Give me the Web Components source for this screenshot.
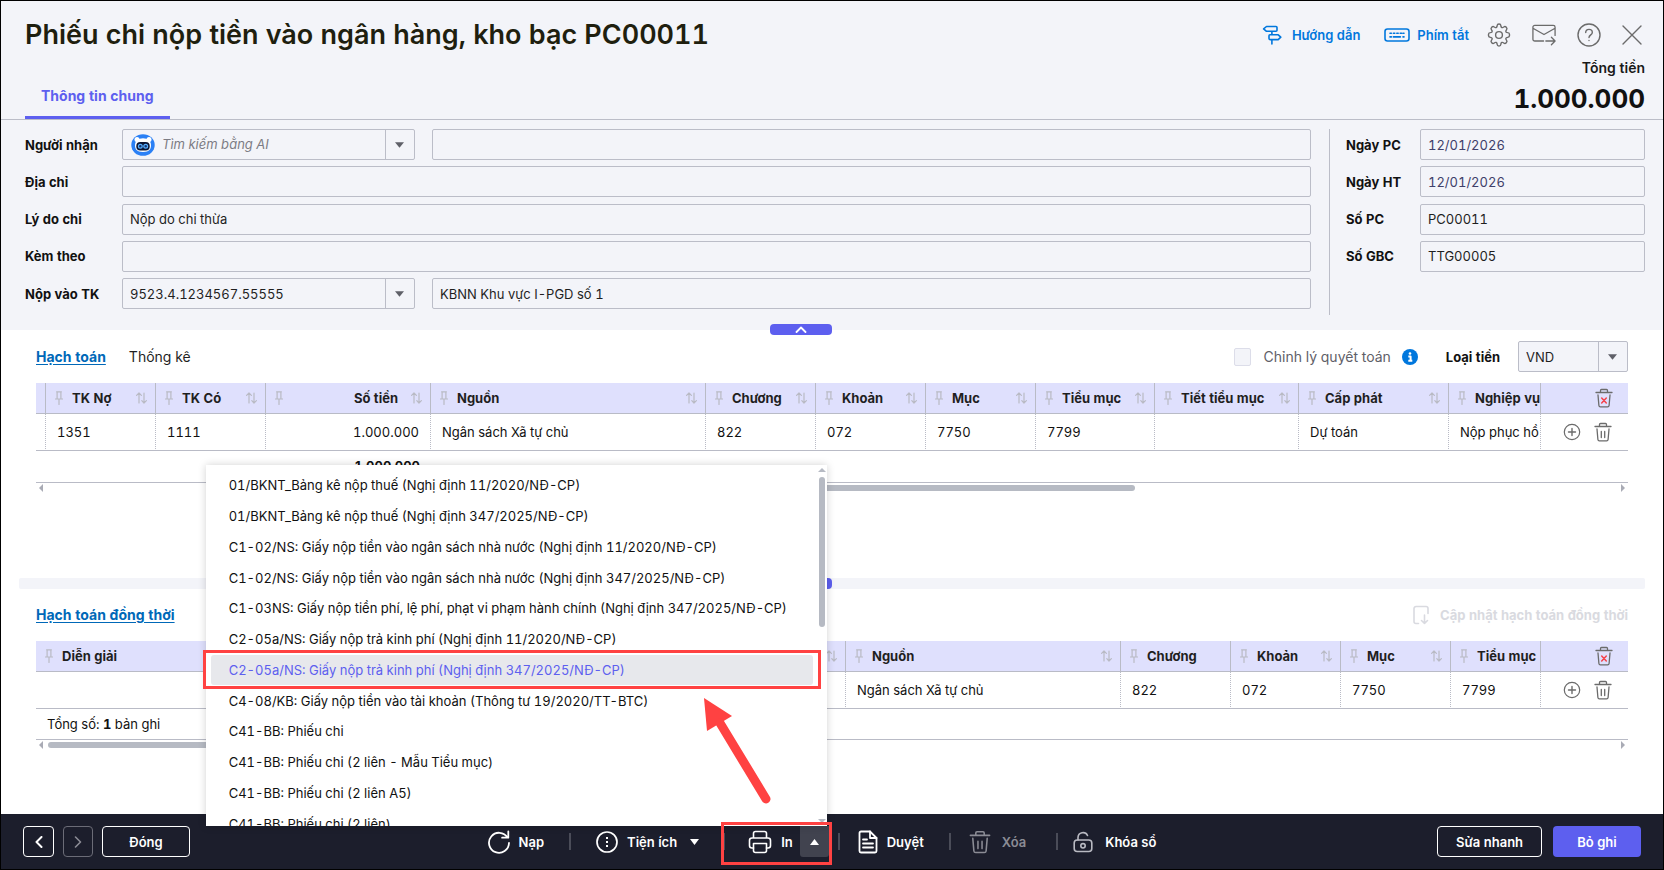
<!DOCTYPE html>
<html lang="vi">
<head>
<meta charset="utf-8">
<title>Phiếu chi nộp tiền vào ngân hàng, kho bạc PC00011</title>
<style>
  html, body { margin: 0; height: 100%; }
  body { font: 13px/20px Inter, "Liberation Sans", sans-serif; font-variant-numeric: tabular-nums; color: #1a1a1a; background: #fff; }
</style>
</head>
<body>
<voucher-page>
  <voucher-header slot="header" heading="Phiếu chi nộp tiền vào ngân hàng, kho bạc PC00011" tab="Thông tin chung" total="1.000.000"></voucher-header>
  <voucher-form slot="header"></voucher-form>
  <collapse-handle></collapse-handle>
  <entry-section></entry-section>
  <pane-splitter></pane-splitter>
  <parallel-section></parallel-section>
  <action-bar slot="footer"></action-bar>
</voucher-page>

<script>
const define = (name, html, setup) => {
  const template = document.createElement('template');
  template.innerHTML = '<style>*, *::before, *::after { box-sizing: border-box; } button, input, select { font: inherit; font-variant-numeric: tabular-nums; color: inherit; margin: 0; } button { padding: 0; border: 0; background: none; }</style>' + html;
  customElements.define(name, class extends HTMLElement {
    connectedCallback() {
      if (this.shadowRoot) return;
      this.attachShadow({ mode: 'open' }).append(template.content.cloneNode(true));
      if (setup) setup(this.shadowRoot, this);
    }
  });
};

/* ---------- icons: [width, height, markup] ---------- */
const ICONS = {
  signpost: [20, 20, '<g stroke-width="1.6"><path d="M4.500 1.500h9.500a1 1 0 0 1 1 1v2.800a1 1 0 0 1-1 1H4.500L1.600 3.900zM16.200 9.800H8a1 1 0 0 0-1 1v2.800a1 1 0 0 0 1 1h8.200l2.600-2.400zM9.900 6.300v3.500M9.900 14.600V19"/></g>'],
  keyboard: [26, 14, '<rect x="1" y="1" width="24" height="12" rx="2.5" stroke-width="1.6"/><path stroke-width="1.6" d="M6 5.3h1.4M9.4 5.3h1.4M12.8 5.3h1.4M16.2 5.3h1.4M19 5.3h1M6 8.9h1.4M9.4 8.9h7M19 8.9h1"/>'],
  gear: [24, 24, '<circle cx="12" cy="12" r="3.4"/><path d="M12 1c1 0 1.8.8 1.9 1.8l.2 1c.2.7 1.100 1.100 1.800.7l.8-.5c.8-.6 1.900-.5 2.600.2.7.7.8 1.800.2 2.600l-.5.8c-.4.7 0 1.600.7 1.800l1 .2c1 .1 1.800.9 1.800 1.900v1c0 1-.8 1.800-1.800 1.900l-1 .2c-.7.2-1.100 1.100-.7 1.800l.5.8c.6.8.5 1.900-.2 2.600-.7.7-1.800.8-2.600.2l-.8-.5c-.7-.4-1.600 0-1.800.7l-.2 1C13.800 22.200 13 23 12 23s-1.800-.8-1.900-1.800l-.2-1c-.2-.7-1.100-1.100-1.800-.7l-.8.5c-.8.6-1.900.5-2.600-.2-.7-.7-.8-1.800-.2-2.600l.5-.8c.4-.7 0-1.600-.7-1.800l-1-.2C2.300 14.200 1.500 13.400 1.500 12.500v-1c0-1 .8-1.800 1.800-1.900l1-.2c.7-.2 1.100-1.100.7-1.800l-.5-.8c-.6-.8-.5-1.900.2-2.600.7-.7 1.800-.8 2.600-.2l.8.5c.7.4 1.600 0 1.800-.7l.2-1C10.200 1.800 11 1 12 1z"/>'],
  mail: [26, 24, '<path d="M12.500 18.500H3a2 2 0 0 1-2-2V3.500a2 2 0 0 1 2-2h20a2 2 0 0 1 2 2v9M1.500 5l11.500 6.500L24.500 5M15 18.500h9.500M21 14.500l4 4-4 4"/>'],
  help: [24, 24, '<circle cx="12" cy="12" r="11"/><path d="M8.700 9.600c0-2 1.400-3.200 3.300-3.200s3.300 1.200 3.300 3c0 2.400-3.300 2.500-3.300 5.200"/><circle cx="12" cy="17.500" r=".7" fill="currentColor" stroke="none"/>'],
  close: [20, 20, '<path d="M1 1l18 18M19 1L1 19"/>'],
  pin: [8, 14, '<path stroke-width="1.200" d="M1.600.800h4.800M2.100.800v6.700M5.900.800v6.700M.400 8h7.200M4 8v5.500"/>'],
  sort: [11, 12, '<path stroke-width="1.200" d="M3 11V1M.600 3.400L3 1l2.400 2.400M8 1v10M5.800 8.600L8 11l2.400-2.400"/>'],
  trash: [18, 20, '<path stroke-width="1.300" d="M1 4.500h16M5.500 4.500V2.500a1 1 0 0 1 1-1h5a1 1 0 0 1 1 1v2M3 7l.900 10.500a1.500 1.500 0 0 0 1.500 1.300h7.200a1.500 1.500 0 0 0 1.500-1.300L15 7M7.300 9.500v6M10.700 9.500v6"/>'],
  trashAll: [18, 20, '<path stroke-width="1.300" d="M1 4.500h16M5.500 4.500V2.500a1 1 0 0 1 1-1h5a1 1 0 0 1 1 1v2M3 7l.900 10.500a1.500 1.500 0 0 0 1.500 1.300h7.200a1.500 1.500 0 0 0 1.500-1.300L15 7"/><path stroke="#f5424b" stroke-width="1.500" d="M6.700 10l4.600 5M11.300 10l-4.600 5"/>'],
  plus: [18, 18, '<circle cx="9" cy="9" r="7.700" stroke-width="1.200"/><path stroke-width="1.400" d="M9 5.500v7M5.500 9h7"/>'],
  update: [18, 20, '<path stroke-width="1.600" d="M6.500 18.500H4a2 2 0 0 1-2-2v-13a2 2 0 0 1 2-2h10a2 2 0 0 1 2 2v5M12.500 10v8.500M9.500 15.500l3 3 3-3"/>'],
  info: [16, 16, '<circle cx="8" cy="8" r="8" fill="#0077dd" stroke="none"/><path stroke="#fff" stroke-width="2" stroke-linecap="butt" d="M6.300 7.500H8.600V11.500M6.300 11.800h4"/><circle cx="8" cy="4.500" r="1.300" fill="#fff" stroke="none"/>'],
  caret: [8, 5, '<path fill="currentColor" stroke="none" d="M0 0h8L4 5z"/>'],
  caretUp: [9, 6, '<path fill="currentColor" stroke="none" d="M0 6h9L4.500 0z"/>'],
  caretDown: [9, 6, '<path fill="currentColor" stroke="none" d="M0 0h9L4.500 6z"/>'],
  chevUp: [12, 7, '<path stroke-width="1.800" d="M1.500 6L6 1.500 10.500 6"/>'],
  chevLeft: [8, 12, '<path stroke-width="2" d="M6.500 1l-5 5 5 5"/>'],
  chevRight: [8, 12, '<path stroke-width="1.600" d="M1.500 1l5 5-5 5"/>'],
  scrollLeft: [4, 8, '<path fill="currentColor" stroke="none" d="M4 0v8L0 4z"/>'],
  scrollRight: [4, 8, '<path fill="currentColor" stroke="none" d="M0 0v8l4-4z"/>'],
  scrollUp: [8, 4, '<path fill="currentColor" stroke="none" d="M0 4h8L4 0z"/>'],
  scrollDown: [8, 4, '<path fill="currentColor" stroke="none" d="M0 0h8L4 4z"/>'],
  reload: [22, 24, '<path stroke-width="1.800" d="M19.500 7.500a10 10 0 1 0 1.500 5.500M20.300 1.500v6.200h-6.200"/>'],
  more: [22, 22, '<circle cx="11" cy="11" r="10" stroke-width="1.700"/><path stroke="none" fill="currentColor" d="M10 6h2v2h-2zM10 10h2v2h-2zM10 14h2v2h-2z"/>'],
  print: [24, 24, '<g stroke-width="1.600"><path d="M5.500 8V3.500a2 2 0 0 1 2-2h9a2 2 0 0 1 2 2V8M5.500 18H4a2.500 2.500 0 0 1-2.500-2.500v-5A2.500 2.500 0 0 1 4 8h16a2.500 2.500 0 0 1 2.500 2.500v5A2.500 2.500 0 0 1 20 18h-1.500"/><path d="M5.500 13.500h13v7a2 2 0 0 1-2 2h-9a2 2 0 0 1-2-2z"/></g>'],
  document: [20, 24, '<g stroke-width="1.800"><path d="M12 1.500H3a1.500 1.500 0 0 0-1.500 1.500v18A1.500 1.500 0 0 0 3 22.500h14a1.500 1.500 0 0 0 1.500-1.500V8z"/><path d="M12 1.500V8h6.500M5 9.500h4M5 13.500h10M5 17.500h10"/></g>'],
  lock: [20, 22, '<g stroke-width="1.600"><rect x="1.200" y="9" width="17.600" height="11.500" rx="3"/><path d="M5 9V6.500a5 5 0 0 1 9.500-2"/><circle cx="10" cy="14.800" r="2.200"/></g>'],
  robot: [24, 22, '<ellipse cx="12" cy="11" rx="11.700" ry="10.800" fill="#2b80f5" stroke="none"/><g fill="#fff" stroke="none"><circle cx="6" cy="5.500" r="2.500"/><circle cx="18" cy="5.500" r="2.500"/><path d="M12 4.200c5 0 8 3 8 6.800s-1.500 7-8 7-8-3.200-8-7 3-6.800 8-6.800z"/></g><rect x="5.300" y="8" width="13.400" height="8.500" rx="4" fill="#0b1433" stroke="none"/><circle cx="9.300" cy="12.200" r="1.900" fill="#12306e" stroke="#58b0ff" stroke-width="1.200"/><circle cx="14.700" cy="12.200" r="1.900" fill="#12306e" stroke="#58b0ff" stroke-width="1.200"/>']
};
customElements.define('ui-icon', class extends HTMLElement {
  connectedCallback() {
    if (this.shadowRoot) return;
    const [w, h, body] = ICONS[this.getAttribute('name')];
    const width = this.getAttribute('w') || w, height = this.getAttribute('h') || h;
    this.attachShadow({ mode: 'open' }).innerHTML =
      `<style>:host{display:inline-flex;flex:none}svg{display:block}</style>
       <svg width="${width}" height="${height}" viewBox="0 0 ${w} ${h}" fill="none" stroke="currentColor" stroke-width="1.400" stroke-linecap="round" stroke-linejoin="round" aria-hidden="true">${body}</svg>`;
  }
});

/* ---------- page shell ---------- */
define('voucher-page', `
<style>
  :host { display: flex; flex-direction: column; min-height: 100%; border: 1px solid #000; box-sizing: border-box; }
  header { background: #f3f4f9; }
  main { flex: 1; }
</style>
<header><slot name="header"></slot></header>
<main><slot></slot></main>
<slot name="footer"></slot>`);

/* ---------- header ---------- */
define('voucher-header', `
<style>
  :host { display: flex; justify-content: space-between; height: 119px; box-sizing: border-box; padding: 0 18px 0 24px; border-bottom: 1px solid #bbbdc8; }
  .left { display: flex; flex-direction: column; justify-content: space-between; }
  h1 { margin: 0; padding-top: 16px; font-size: 27px; line-height: 36px; font-weight: 600; color: #1f1f0f; }
  nav { display: flex; }
  nav a { padding: 0 16px 8px; font-weight: 700; font-size: 14px; line-height: 24px; color: #5d5fef; text-decoration: none; border-bottom: 3px solid #5d5fef; }
  .right { display: flex; flex-direction: column; align-items: flex-end; }
  .tools { display: flex; align-items: center; padding: 22px 3px 0 0; height: 46px; color: #6b6b6b; }
  .tools a { display: flex; align-items: center; gap: 10px; margin-right: 24px; color: #0077dd; text-decoration: none; font-weight: 600; line-height: 24px; }
  .tools a + a { gap: 7px; margin-right: 18px; }
  .tools button { display: flex; }
  .tools .icons { display: flex; align-items: center; gap: 21px; }
  .caption { margin-top: 11px; font-size: 14px; font-weight: 600; line-height: 20px; }
  .total { font-size: 26px; font-weight: 700; line-height: 42px; color: #111; }
</style>
<div class="left">
  <h1></h1>
  <nav><a href="#general"></a></nav>
</div>
<div class="right">
  <div class="tools">
    <a href="#guide"><ui-icon name="signpost"></ui-icon>Hướng dẫn</a>
    <a href="#shortcuts"><ui-icon name="keyboard"></ui-icon>Phím tắt</a>
    <div class="icons">
      <button aria-label="Thiết lập"><ui-icon name="gear"></ui-icon></button>
      <button aria-label="Gửi thư"><ui-icon name="mail" w="24"></ui-icon></button>
      <button aria-label="Trợ giúp"><ui-icon name="help"></ui-icon></button>
      <button aria-label="Thoát"><ui-icon name="close"></ui-icon></button>
    </div>
  </div>
  <div class="caption">Tổng tiền</div>
  <div class="total"></div>
</div>`, (root, host) => {
  root.querySelector('h1').textContent = host.getAttribute('heading');
  root.querySelector('nav a').textContent = host.getAttribute('tab');
  root.querySelector('.total').textContent = host.getAttribute('total');
});

/* ---------- voucher form ---------- */
const FIELD_CSS = `
  input, .combo { width: 100%; min-width: 0; height: 31px; border: 1px solid #bbbdc8; border-radius: 2px; background: #f3f4f9; color: #1f1f1f; }
  input { padding: 0 7px; line-height: 29px; outline: 0; }
  .combo { display: flex; position: relative; }
  .combo select, .combo input { flex: 1; height: 29px; width: 100%; border: 0; background: none; appearance: none; outline: 0; padding: 0 7px; }
  .combo .arrow { width: 29px; padding-right: 2px; display: flex; align-items: center; justify-content: center; border-left: 1px solid #bbbdc8; color: #5f6068; pointer-events: none; flex: none; }`;
define('voucher-form', `
<style>
  :host { display: flex; padding: 9px 18px 15px 24px; }
  ${FIELD_CSS}
  .main, .side { display: grid; grid-template-rows: repeat(5, 31px); align-content: space-between; height: 180px; align-items: center; }
  .main { flex: 1; grid-template-columns: 97px 293px 17px 1fr; }
  .side { grid-template-columns: 74px 225px; margin-left: 16px; }
  .rule { width: 1px; height: 186px; margin-left: 18px; background: #bbbdc8; }
  label { font-weight: 700; color: #111; }
  .wide { grid-column: 2 / 5; }
  .last { grid-column: 4; }
  ui-icon[name=robot] { align-self: center; margin-left: 8px; }
  ::placeholder { color: #7c7c84; font-style: italic; opacity: 1; }
  .date { color: #40406a; }
</style>
<div class="main">
  <label for="receiver">Người nhận</label>
  <div class="combo"><ui-icon name="robot"></ui-icon><input id="receiver" placeholder="Tìm kiếm bằng AI"><span class="arrow"><ui-icon name="caret" w="9" h="6"></ui-icon></span></div>
  <input class="last" aria-label="Tên người nhận">
  <label for="address">Địa chỉ</label><input class="wide" id="address">
  <label for="reason">Lý do chi</label><input class="wide" id="reason" value="Nộp do chi thừa">
  <label for="attach">Kèm theo</label><input class="wide" id="attach">
  <label for="account">Nộp vào TK</label>
  <div class="combo"><select id="account"><option>9523.4.1234567.55555</option></select><span class="arrow"><ui-icon name="caret" w="9" h="6"></ui-icon></span></div>
  <input class="last" aria-label="Tên tài khoản" value="KBNN Khu vực I-PGD số 1">
</div>
<div class="rule"></div>
<div class="side">
  <label for="pcDate">Ngày PC</label><input id="pcDate" class="date" value="12/01/2026">
  <label for="htDate">Ngày HT</label><input id="htDate" class="date" value="12/01/2026">
  <label for="pcNo">Số PC</label><input id="pcNo" value="PC00011">
  <label for="gbcNo">Số GBC</label><input id="gbcNo" value="TTG00005">
</div>`);

/* ---------- collapse handle under the form ---------- */
define('collapse-handle', `
<style>
  :host { display: flex; justify-content: center; height: 0; position: relative; }
  button { width: 62px; height: 11px; margin: -6px 62px 0 0; border-radius: 4px; background: #5d5fef; color: #fff; display: flex; align-items: center; justify-content: center; }
</style>
<button aria-label="Thu gọn thông tin chung"><ui-icon name="chevUp"></ui-icon></button>`);

/* ---------- data grid ---------- */
define('data-grid', `
<style>
  :host { display: block; }
  table { width: 100%; table-layout: fixed; border-collapse: separate; border-spacing: 0; }
  th, td { padding: 0; overflow: hidden; white-space: nowrap; }
  th { height: 31px; background: #dfe0fd; border-bottom: 1px solid #b9bbc6; border-right: 1px solid #b9bbc6; color: #1f1f1f; font-weight: 700; }
  .head { display: flex; align-items: center; padding: 0 8px 0 9px; gap: 9px; color: #b9bac4; }
  .head b { flex: 1; font-weight: 700; color: #1f1f1f; text-align: left; }
  .num .head b { text-align: right; padding-right: 4px; }
  .clip .head { padding-right: 0; }
  td { height: 37px; border-bottom: 1px solid #b9bbc6; border-right: 1px dotted #b9bbc6; padding: 0 11px; color: #111; }
  td.clip { padding-right: 0; }
  td.num { text-align: right; }
  th:last-child, td:last-child { border-right: 0; color: #6b6b6b; }
  .ops { display: flex; align-items: center; justify-content: flex-end; gap: 13px; }
  th .ops { padding-right: 15px; }
  td .ops { padding-right: 5px; }
  .ops button { display: flex; }
  tfoot td { height: 32px; border-right: 0; font-weight: 700; padding-bottom: 1px; }
  tfoot td.note { height: 31px; font-weight: 400; color: #111; }
  .bar { display: flex; align-items: center; height: 10px; padding: 0 3px; gap: 5px; color: #a9abb5; }
  .track { flex: 1; display: grid; }
  .thumb { height: 6px; border-radius: 3px; background: #b6bac3; }
</style>
<table><colgroup></colgroup><thead><tr></tr></thead><tbody><tr></tr></tbody><tfoot><tr></tr></tfoot></table>
<div class="bar"><ui-icon name="scrollLeft"></ui-icon><div class="track"><div class="thumb"></div></div><ui-icon name="scrollRight"></ui-icon></div>`,
(root, host) => {
  const cols = host.columns || [];
  const $ = s => root.querySelector(s);
  $('colgroup').innerHTML = cols.map(c => `<col${c.w ? ` style="width:${c.w}px"` : ''}>`).join('') + '<col style="width:87px">';
  $('thead tr').innerHTML = cols.map(c => {
    const cls = (c.num ? 'num ' : '') + (c.clip ? 'clip' : '');
    return c.label ? `<th class="${cls}"><div class="head"><ui-icon name="pin"></ui-icon><b>${c.label}</b>${c.sort === false ? '' : '<ui-icon name="sort"></ui-icon>'}</div></th>` : '<th></th>';
  }).join('') + '<th><div class="ops"><button aria-label="Xóa tất cả"><ui-icon name="trashAll"></ui-icon></button></div></th>';
  $('tbody tr').innerHTML = cols.map(c => `<td class="${(c.num ? 'num ' : '') + (c.clip ? 'clip' : '')}">${c.value || ''}</td>`).join('') +
    '<td><div class="ops"><button aria-label="Thêm dòng"><ui-icon name="plus"></ui-icon></button><button aria-label="Xóa dòng"><ui-icon name="trash"></ui-icon></button></div></td>';
  $('tfoot tr').innerHTML = host.note
    ? `<td class="note" colspan="${cols.length + 1}">${host.note}</td>`
    : cols.map(c => `<td class="${c.num ? 'num' : ''}">${c.sum || ''}</td>`).join('') + '<td></td>';
  $('.thumb').style.marginLeft = host.thumb[0];
  $('.thumb').style.width = host.thumb[1];
});

/* ---------- main entries ---------- */
define('entry-section', `
<style>
  :host { display: block; padding: 10px 35px 0; }
  ${FIELD_CSS}
  .toolbar { display: flex; align-items: center; height: 33px; margin-bottom: 10px; font-size: 14px; }
  nav { display: flex; gap: 23px; flex: 1; }
  nav a { color: #1f1f1f; text-decoration: none; }
  nav a.on { color: #0068b8; font-weight: 700; text-decoration: underline; text-underline-offset: 2px; }
  input[type=checkbox] { appearance: none; width: 17px; height: 18px; padding: 0; border: 1px solid #dcdde9; margin-right: 13px; }
  .adjust { display: flex; align-items: center; color: #5f6068; }
  ui-icon[name=info] { margin: 0 28px 0 11px; }
  .currency { font-size: 13px; font-weight: 700; color: #111; margin-right: 18px; }
  .combo { width: 110px; font-size: 13px; }
</style>
<div class="toolbar">
  <nav><a class="on" href="#entries">Hạch toán</a><a href="#statistics">Thống kê</a></nav>
  <label class="adjust"><input type="checkbox" disabled>Chỉnh lý quyết toán</label>
  <ui-icon name="info"></ui-icon>
  <label class="currency" for="currency">Loại tiền</label>
  <div class="combo"><select id="currency"><option>VND</option></select><span class="arrow"><ui-icon name="caret" w="9" h="6"></ui-icon></span></div>
</div>
<div class="grid"></div>`, root => {
  const grid = document.createElement('data-grid');
  grid.columns = [
    { w: 10 },
    { label: 'TK Nợ', w: 110, value: '1351' },
    { label: 'TK Có', w: 110, value: '1111' },
    { label: 'Số tiền', w: 165, value: '1.000.000', sum: '1.000.000', num: true },
    { label: 'Nguồn', value: 'Ngân sách Xã tự chủ' },
    { label: 'Chương', w: 110, value: '822' },
    { label: 'Khoản', w: 110, value: '072' },
    { label: 'Mục', w: 110, value: '7750' },
    { label: 'Tiểu mục', w: 119, value: '7799' },
    { label: 'Tiết tiểu mục', w: 144 },
    { label: 'Cấp phát', w: 150, value: 'Dự toán' },
    { label: 'Nghiệp vụ', w: 92, value: 'Nộp phục hồ', clip: true, sort: false }
  ];
  grid.thumb = ['30%', '39.3%'];
  root.querySelector('.grid').append(grid);
});

/* ---------- splitter ---------- */
define('pane-splitter', `
<style>
  :host { display: flex; justify-content: center; margin: 85px 18px 0; height: 11px; border-radius: 2px; background: #f3f4f9; }
  button { width: 62px; height: 11px; margin-right: 62px; border-radius: 4px; background: #5d5fef; color: #fff; display: flex; align-items: center; justify-content: center; }
</style>
<button aria-label="Thu gọn"><ui-icon name="chevUp"></ui-icon></button>`);

/* ---------- parallel entries ---------- */
define('parallel-section', `
<style>
  :host { display: block; padding: 10px 35px 0; }
  .toolbar { display: flex; align-items: center; justify-content: space-between; height: 32px; margin-bottom: 10px; font-size: 14px; font-weight: 700; }
  a { color: #0068b8; text-underline-offset: 2px; }
  button { display: flex; align-items: center; gap: 10px; color: #d9dae0; font-size: 13px; font-weight: 700; }
</style>
<div class="toolbar">
  <a href="#parallel">Hạch toán đồng thời</a>
  <button disabled><ui-icon name="update"></ui-icon>Cập nhật hạch toán đồng thời</button>
</div>
<div class="grid"></div>`, root => {
  const grid = document.createElement('data-grid');
  grid.columns = [
    { label: 'Diễn giải' },
    { label: 'TK Nợ', w: 110 },
    { label: 'TK Có', w: 110 },
    { label: 'Số tiền', w: 165, num: true },
    { label: 'Nguồn', w: 275, value: 'Ngân sách Xã tự chủ' },
    { label: 'Chương', w: 110, value: '822', sort: false },
    { label: 'Khoản', w: 110, value: '072' },
    { label: 'Mục', w: 110, value: '7750' },
    { label: 'Tiểu mục', w: 90, value: '7799', clip: true, sort: false }
  ];
  grid.note = 'Tổng số: <b>1</b> bản ghi';
  grid.thumb = ['0', '44%'];
  root.querySelector('.grid').append(grid);
});

/* ---------- print menu ---------- */
define('print-menu', `
<style>
  :host { display: block; width: 621px; height: 361px; background: #fff; color: #111; box-shadow: 0 0 8px rgba(0, 0, 0, .18); }
  .view { height: 100%; overflow: hidden; margin-left: -4px; padding: 5px 14px 0 9px; }
  ul { list-style: none; margin: 0; padding: 0; height: 369px; display: flex; flex-direction: column; }
  li { flex: 1; display: flex; position: relative; }
  li button { width: 100%; text-align: left; padding: 0 18px; border-radius: 3px; white-space: nowrap; }
  li.on button { background: #e7e8ec; color: #5d5fef; }
  li.on::after { content: ""; position: absolute; inset: -5px -8px -4px; border: 3px solid #ff4242; }
  .scroll { position: absolute; top: 3px; bottom: 3px; right: 1px; width: 8px; display: flex; flex-direction: column; align-items: center; justify-content: space-between; color: #b6bac3; }
  .track { flex: 1; padding-top: 5px; }
  .thumb { width: 6px; height: 150px; border-radius: 3px; background: #b6bac3; }
  .pointer { position: absolute; left: 495px; top: 231px; }
</style>
<div class="view"><ul></ul></div>
<div class="scroll"><ui-icon name="scrollUp"></ui-icon><div class="track"><div class="thumb"></div></div><ui-icon name="scrollDown"></ui-icon></div>
<svg class="pointer" width="74" height="110" viewBox="0 0 74 110" aria-hidden="true"><path d="M3 2L31 20 6 35z" fill="#ff4242"/><path d="M19 27L65 103" stroke="#ff4242" stroke-width="9" stroke-linecap="round"/></svg>`,
root => {
  const items = [
    '01/BKNT_Bảng kê nộp thuế (Nghị định 11/2020/NĐ-CP)',
    '01/BKNT_Bảng kê nộp thuế (Nghị định 347/2025/NĐ-CP)',
    'C1-02/NS: Giấy nộp tiền vào ngân sách nhà nước (Nghị định 11/2020/NĐ-CP)',
    'C1-02/NS: Giấy nộp tiền vào ngân sách nhà nước (Nghị định 347/2025/NĐ-CP)',
    'C1-03NS: Giấy nộp tiền phí, lệ phí, phạt vi phạm hành chính (Nghị định 347/2025/NĐ-CP)',
    'C2-05a/NS: Giấy nộp trả kinh phí (Nghị định 11/2020/NĐ-CP)',
    'C2-05a/NS: Giấy nộp trả kinh phí (Nghị định 347/2025/NĐ-CP)',
    'C4-08/KB: Giấy nộp tiền vào tài khoản (Thông tư 19/2020/TT-BTC)',
    'C41-BB: Phiếu chi',
    'C41-BB: Phiếu chi (2 liên - Mẫu Tiểu mục)',
    'C41-BB: Phiếu chi (2 liên A5)',
    'C41-BB: Phiếu chi (2 liên)'
  ];
  root.querySelector('ul').innerHTML = items.map((t, i) => `<li${i === 6 ? ' class="on"' : ''}><button>${t}</button></li>`).join('');
});

/* ---------- action bar ---------- */
define('action-bar', `
<style>
  :host { display: grid; grid-template-columns: 1fr auto 1fr; align-items: center; height: 55px; padding: 0 22px; background: #1c1e2c; color: #fff; }
  button { font-weight: 600; display: flex; align-items: center; justify-content: center; height: 31px; white-space: nowrap; }
  .box { border: 1px solid #fff; border-radius: 4px; }
  .group { display: flex; align-items: center; }
  .nav { gap: 9px; }
  .nav .step { width: 31px; }
  .nav .close { width: 88px; }
  .nav .step[disabled] { width: 30px; color: #8b8c95; border-color: #6b6c77; }
  .tasks { padding-right: 20px; }
  .tasks button { gap: 9px; }
  .tasks .more ui-icon:last-child { margin-left: 4px; }
  .sep { width: 2px; height: 17px; margin: 0 25px; background: #4a4c58; }
  .sep.print-sep { margin: 0 23px 0 24px; }
  .sep.tight { margin: 0 18px 0 9px; }
  .sep.late { margin: 0 18px 0 25px; }
  .sep.end-sep { margin: 0 15px 0 30px; }
  .print { position: relative; display: flex; }
  .print .open { width: 29px; margin-left: 7px; background: #41434f; border-radius: 0 0 3px 3px; }
  .print::after { content: ""; position: absolute; inset: -4px -3px -8px -27px; border: 3px solid #ff4242; pointer-events: none; }
  print-menu { position: absolute; bottom: 100%; right: 2px; }
  .tasks .off { gap: 11px; color: #8b8c95; }
  .tasks .lock { gap: 12px; }
  .lock ui-icon { color: #b9bac2; }
  .end { gap: 11px; justify-content: flex-end; }
  .quick { width: 105px; }
  .primary { width: 88px; background: #5d5fef; border-radius: 4px; }
</style>
<div class="group nav">
  <button class="box step" aria-label="Trước"><ui-icon name="chevLeft"></ui-icon></button>
  <button class="box step" aria-label="Sau" disabled><ui-icon name="chevRight"></ui-icon></button>
  <button class="box close">Đóng</button>
</div>
<div class="group tasks">
  <button><ui-icon name="reload"></ui-icon>Nạp</button>
  <span class="sep"></span>
  <button class="more"><ui-icon name="more"></ui-icon>Tiện ích<ui-icon name="caretDown"></ui-icon></button>
  <span class="sep print-sep"></span>
  <div class="print">
    <button><ui-icon name="print"></ui-icon>In</button>
    <button class="open" aria-label="Chọn mẫu in"><ui-icon name="caretUp"></ui-icon></button>
    <print-menu></print-menu>
  </div>
  <span class="sep tight"></span>
  <button><ui-icon name="document"></ui-icon>Duyệt</button>
  <span class="sep late"></span>
  <button class="off" disabled><ui-icon name="trash" w="22" h="24"></ui-icon>Xóa</button>
  <span class="sep end-sep"></span>
  <button class="lock"><ui-icon name="lock"></ui-icon>Khóa sổ</button>
</div>
<div class="group end">
  <button class="box quick">Sửa nhanh</button>
  <button class="primary">Bỏ ghi</button>
</div>`);
</script>
</body>
</html>
